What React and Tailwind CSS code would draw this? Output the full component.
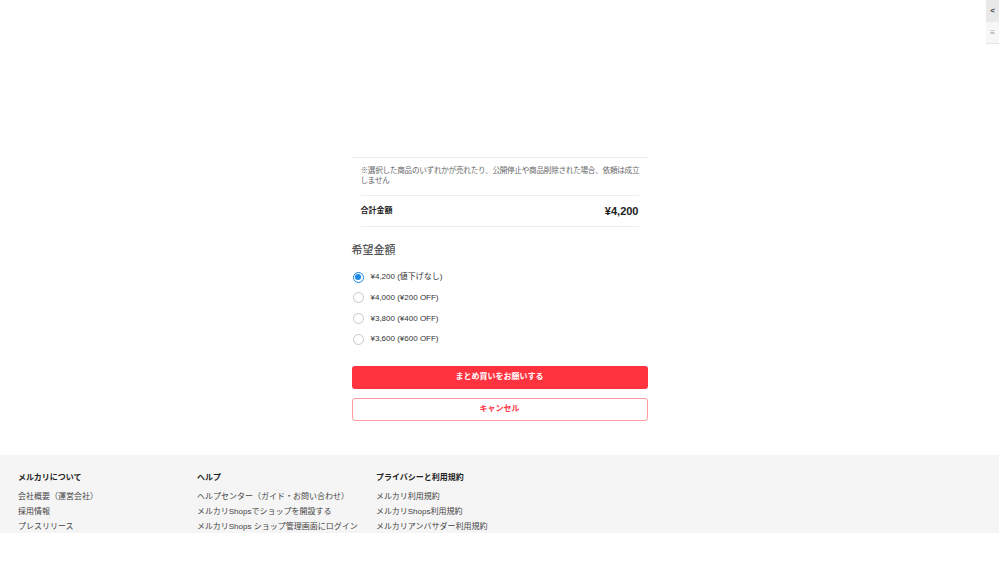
import React from "react";

const font = { fontFamily: '"Liberation Sans", "Noto Sans CJK JP", sans-serif' };

function Radio({ checked }) {
  return checked ? (
    <span className="w-[11px] h-[11px] rounded-full border-[1.5px] border-[#1b87e6] flex items-center justify-center bg-white">
      <span className="w-[6px] h-[6px] rounded-full bg-[#1b87e6]" />
    </span>
  ) : (
    <span className="w-[11px] h-[11px] rounded-full border border-[#c8c8c8] bg-white" />
  );
}

export default function App() {
  const options = [
    "¥4,200 (値下げなし)",
    "¥4,000 (¥200 OFF)",
    "¥3,800 (¥400 OFF)",
    "¥3,600 (¥600 OFF)",
  ];
  const cols = [
    { h: "メルカリについて", items: ["会社概要（運営会社）", "採用情報", "プレスリリース"] },
    { h: "ヘルプ", items: ["ヘルプセンター（ガイド・お問い合わせ）", "メルカリShopsでショップを開設する", "メルカリShops ショップ管理画面にログイン"] },
    { h: "プライバシーと利用規約", items: ["メルカリ利用規約", "メルカリShops利用規約", "メルカリアンバサダー利用規約"] },
  ];
  return (
    <div className="relative w-full h-[562px] bg-white overflow-hidden text-[#333]" style={font}>
      <div className="flex justify-center pt-[157px]">
        <div className="w-[296px]">
          <div className="border-t border-[#ececec] px-[9px]">
            <div className="pt-[8px] pb-[9px] border-b border-[#ececec] text-[7.6px] leading-[10px] tracking-[-0.25px] text-[#666]">
              <span className="whitespace-nowrap">※選択した商品のいずれかが売れたり、公開停止や商品削除された場合、依頼は成立</span>
              <br />
              しません
            </div>
            <div className="h-[31px] flex items-center justify-between border-b border-[#ececec]">
              <span className="text-[8px] font-bold text-[#222]">合計金額</span>
              <span className="text-[11px] font-bold text-[#222]">¥4,200</span>
            </div>
          </div>
          <div className="mt-[16px] text-[11px] leading-[14px] font-medium text-[#555]">希望金額</div>
          <div className="mt-[10px] flex flex-col">
            {options.map((o, i) => (
              <div key={o} className="h-[20.67px] flex items-center gap-[7px] pl-[1px]">
                <Radio checked={i === 0} />
                <span className="text-[8px] text-[#333]">{o}</span>
              </div>
            ))}
          </div>
          <button className="mt-[16px] w-full h-[23px] rounded-[3px] bg-[#ff333f] text-white text-[8px] font-bold flex items-center justify-center">
            まとめ買いをお願いする
          </button>
          <button className="mt-[9px] w-full h-[23px] rounded-[3px] border border-[#ff9aa0] bg-white text-[#ff333f] text-[8px] font-bold flex items-center justify-center">
            キャンセル
          </button>
        </div>
      </div>
      <div className="mt-[34px] h-[78px] bg-[#f5f5f5] overflow-hidden pl-[18px] pt-[18px] flex">
        {cols.map((c) => (
          <div key={c.h} className="w-[179px] shrink-0">
            <div className="text-[8px] leading-[10px] font-bold text-[#222]">{c.h}</div>
            <div className="mt-[6px] flex flex-col">
              {c.items.map((it) => (
                <div key={it} className="text-[8px] leading-[15px] text-[#444] whitespace-nowrap">{it}</div>
              ))}
            </div>
          </div>
        ))}
      </div>
      <div className="absolute top-0 right-0 w-[13px] flex flex-col">
        <div className="h-[22px] bg-[#e9e9e9] flex items-center justify-center text-[8px] font-bold leading-none text-[#444]">&lt;</div>
        <div className="h-[22px] bg-[#f7f7f7] border-b border-[#e4e4e4] flex items-center justify-center text-[8px] leading-none text-[#999]">≡</div>
      </div>
    </div>
  );
}
